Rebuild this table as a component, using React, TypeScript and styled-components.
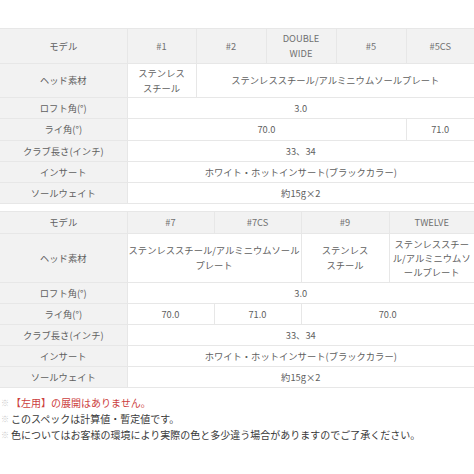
import React from "react";
import styled, { createGlobalStyle } from "styled-components";

const Global = createGlobalStyle`
  html, body { margin: 0; padding: 0; background: #fff; }
  body { font-family: "Noto Sans CJK JP", "Noto Sans", sans-serif; color: #555; }
`;

const Page = styled.div`
  width: 474px;
  padding-top: 28px;
  display: flex;
  flex-direction: column;
  gap: 7px;
`;

const Table = styled.table`
  width: 474px;
  border-collapse: collapse;
  table-layout: fixed;
  font-size: 9.3px;
  color: #606060;
`;

const Row = styled.tr<{ $h: number }>`
  height: ${(p) => p.$h}px;
`;

const Label = styled.th`
  background: #f2f2f2;
  font-weight: normal;
  text-align: center;
  padding: 0;
  border-top: 1px solid #e7e7e7;
  border-bottom: 1px solid #e7e7e7;
  line-height: 15px;
`;

const HeadCell = styled.th`
  background: #f2f2f2;
  font-weight: normal;
  text-align: center;
  padding: 0;
  color: #707070;
  border: 1px solid #e7e7e7;
  line-height: 15px;
  &:last-child { border-right: none; }
`;

const Cell = styled.td<{ $lh?: number }>`
  text-align: center;
  padding: 0;
  border: 1px solid #e7e7e7;
  line-height: ${(p) => p.$lh ?? 15}px;
  &:last-child { border-right: none; }
`;

const Notes = styled.div`
  display: flex;
  flex-direction: column;
  font-size: 10px;
  line-height: 16px;
  color: #3a3a3a;
`;

const Note = styled.div<{ $red?: boolean }>`
  display: flex;
  color: ${(p) => (p.$red ? "#cc4040" : "#3a3a3a")};
`;

const Mark = styled.span`
  color: #c8c8c8;
  width: 10px;
  display: inline-block;
  font-size: 8px;
  padding-left: 1px;
`;

export default function App() {
  return (
    <>
      <Global />
      <Page>
        <Table>
          <colgroup>
            <col style={{ width: 127 }} />
            <col style={{ width: 69 }} />
            <col style={{ width: 70 }} />
            <col style={{ width: 70 }} />
            <col style={{ width: 70 }} />
            <col style={{ width: 68 }} />
          </colgroup>
          <tbody>
            <Row $h={35}>
              <Label>モデル</Label>
              <HeadCell>#1</HeadCell>
              <HeadCell>#2</HeadCell>
              <HeadCell>DOUBLE<br />WIDE</HeadCell>
              <HeadCell>#5</HeadCell>
              <HeadCell>#5CS</HeadCell>
            </Row>
            <Row $h={34}>
              <Label>ヘッド素材</Label>
              <Cell>ステンレス<br />スチール</Cell>
              <Cell colSpan={5}>ステンレススチール/アルミニウムソールプレート</Cell>
            </Row>
            <Row $h={21}>
              <Label>ロフト角(°)</Label>
              <Cell colSpan={5}>3.0</Cell>
            </Row>
            <Row $h={22}>
              <Label>ライ角(°)</Label>
              <Cell colSpan={4}>70.0</Cell>
              <Cell>71.0</Cell>
            </Row>
            <Row $h={21}>
              <Label>クラブ長さ(インチ)</Label>
              <Cell colSpan={5}>33、34</Cell>
            </Row>
            <Row $h={21}>
              <Label>インサート</Label>
              <Cell colSpan={5}>ホワイト・ホットインサート(ブラックカラー)</Cell>
            </Row>
            <Row $h={21}>
              <Label>ソールウェイト</Label>
              <Cell colSpan={5}>約15g×2</Cell>
            </Row>
          </tbody>
        </Table>
        <Table>
          <colgroup>
            <col style={{ width: 127 }} />
            <col style={{ width: 87 }} />
            <col style={{ width: 87 }} />
            <col style={{ width: 88 }} />
            <col style={{ width: 85 }} />
          </colgroup>
          <tbody>
            <Row $h={22}>
              <Label>モデル</Label>
              <HeadCell>#7</HeadCell>
              <HeadCell>#7CS</HeadCell>
              <HeadCell>#9</HeadCell>
              <HeadCell>TWELVE</HeadCell>
            </Row>
            <Row $h={49}>
              <Label>ヘッド素材</Label>
              <Cell colSpan={2}>ステンレススチール/アルミニウムソール<br />プレート</Cell>
              <Cell>ステンレス<br />スチール</Cell>
              <Cell $lh={14}>ステンレススチー<br />ル/アルミニウムソ<br />ールプレート</Cell>
            </Row>
            <Row $h={21}>
              <Label>ロフト角(°)</Label>
              <Cell colSpan={4}>3.0</Cell>
            </Row>
            <Row $h={21}>
              <Label>ライ角(°)</Label>
              <Cell>70.0</Cell>
              <Cell>71.0</Cell>
              <Cell colSpan={2}>70.0</Cell>
            </Row>
            <Row $h={21}>
              <Label>クラブ長さ(インチ)</Label>
              <Cell colSpan={4}>33、34</Cell>
            </Row>
            <Row $h={21}>
              <Label>インサート</Label>
              <Cell colSpan={4}>ホワイト・ホットインサート(ブラックカラー)</Cell>
            </Row>
            <Row $h={21}>
              <Label>ソールウェイト</Label>
              <Cell colSpan={4}>約15g×2</Cell>
            </Row>
          </tbody>
        </Table>
        <Notes>
          <Note $red><Mark>※</Mark>【左用】の展開はありません。</Note>
          <Note><Mark>※</Mark>このスペックは計算値・暫定値です。</Note>
          <Note><Mark>※</Mark>色についてはお客様の環境により実際の色と多少違う場合がありますのでご了承ください。</Note>
        </Notes>
      </Page>
    </>
  );
}
